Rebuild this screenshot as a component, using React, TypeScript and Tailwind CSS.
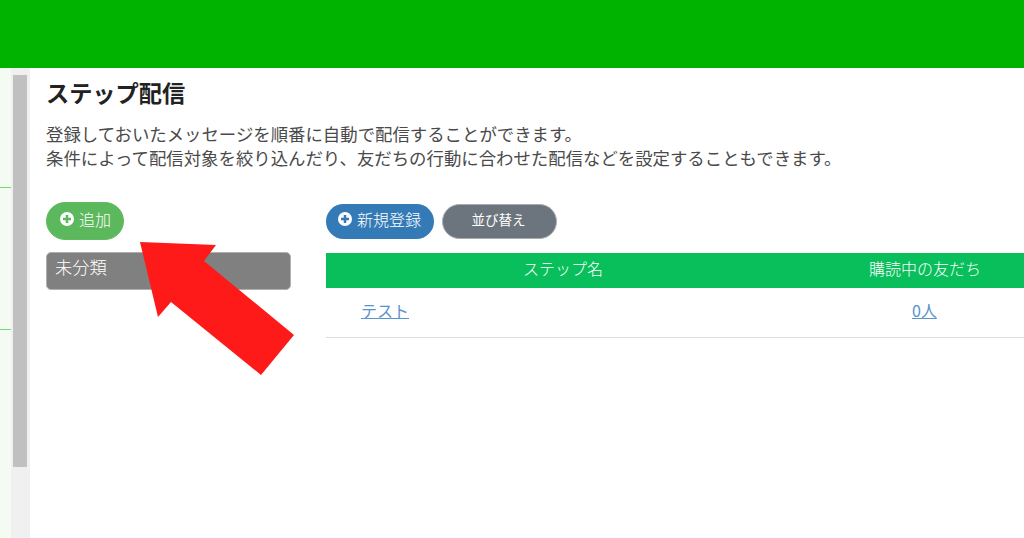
function PlusIcon() {
  return (
    <svg width="14" height="14" viewBox="0 0 14 14" className="shrink-0">
      <circle cx="7" cy="7" r="7" fill="#ffffff" />
      <rect x="3" y="5.75" width="8" height="2.5" fill="currentColor" />
      <rect x="5.75" y="3" width="2.5" height="8" fill="currentColor" />
    </svg>
  );
}

function Sidebar() {
  return (
    <div className="flex shrink-0">
      {/* green nav strip, cut off by the crop */}
      <div className="w-[11px] bg-[#f3fbf3] flex flex-col">
        <div className="h-[120px] border-b border-[#6fdc6f]" />
        <div className="h-[142px] border-b border-[#6fdc6f]" />
      </div>
      {/* scrollbar */}
      <div className="w-[19px] bg-[#f0f0f0] pl-[2px] pt-[7px]">
        <div className="w-[14px] h-[392px] bg-[#c0c0c0]" />
      </div>
    </div>
  );
}

export default function App() {
  return (
    <div
      className="relative w-[1024px] h-[538px] overflow-hidden bg-white flex flex-col"
      style={{ fontFamily: '"Noto Sans CJK JP", "Noto Sans", sans-serif' }}
    >
      <div className="h-[68px] bg-[#00b300] shrink-0" />

      <div className="flex flex-1 min-h-0">
        <Sidebar />

        <div className="flex-1 min-w-0 pl-[16px] pt-[8px]">
          <h1 className="text-[23.2px] leading-[32px] font-bold text-[#222222]">ステップ配信</h1>
          <p className="mt-[14px] text-[17.4px] leading-[24px] text-[#4a4a4a] whitespace-nowrap">
            登録しておいたメッセージを順番に自動で配信することができます。
            <br />
            条件によって配信対象を絞り込んだり、友だちの行動に合わせた配信などを設定することもできます。
          </p>

          <div className="flex mt-[32px]">
            {/* categories */}
            <div className="w-[245px] shrink-0">
              <button className="flex items-center gap-[5px] h-[38px] w-[78px] pl-[13px] pb-[4px] rounded-full bg-[#5cb85c] text-[#5cb85c] border border-[#62bb62]">
                <PlusIcon />
                <span className="text-[16px] text-white font-light">追加</span>
              </button>
              <div className="mt-[12px] h-[38px] rounded-[5px] bg-[#808080] border border-[#b0b0b0] pl-[8px] text-[17.3px] font-light leading-[28px] text-white">
                未分類
              </div>
            </div>

            {/* steps */}
            <div className="ml-[35px] pt-[2px] flex-1 min-w-0">
              <div className="flex gap-[8px]">
                <button className="flex items-center gap-[5px] h-[35px] w-[108px] pl-[12px] pb-[5px] rounded-full bg-[#337ab7] text-[#337ab7]">
                  <PlusIcon />
                  <span className="text-[16px] text-white font-light">新規登録</span>
                </button>
                <button className="h-[35px] w-[115px] pb-[4px] pr-[2px] rounded-full bg-[#6c757d] border border-[#a8adb2] text-[13.5px] text-white">
                  並び替え
                </button>
              </div>

              <div className="mt-[14px] grid grid-cols-[476px_1fr] text-[16px]">
                <div className="h-[35px] pb-[6px] pr-[2px] bg-[#08bf5b] text-white font-light flex items-center justify-center">ステップ名</div>
                <div className="h-[35px] pb-[6px] bg-[#08bf5b] text-white font-light flex items-center pl-[67px]">購読中の友だち</div>
                <div className="h-[50px] pb-[6px] border-b border-[#dddddd] flex items-center pl-[35px]">
                  <a href="#" className="text-[#5b93cc] underline">テスト</a>
                </div>
                <div className="h-[50px] pb-[6px] border-b border-[#dddddd] flex items-center pl-[110px]">
                  <a href="#" className="text-[#5b93cc] underline">0人</a>
                </div>
              </div>
            </div>
          </div>
        </div>
      </div>

      {/* annotation arrow over the page */}
      <svg width="1024" height="538" viewBox="0 0 1024 538" className="absolute inset-0 pointer-events-none">
        <polygon
          points="140,242 216,245 204,261 294,335 261,375 171,302 158,317"
          fill="#ff1a1a"
        />
      </svg>
    </div>
  );
}
